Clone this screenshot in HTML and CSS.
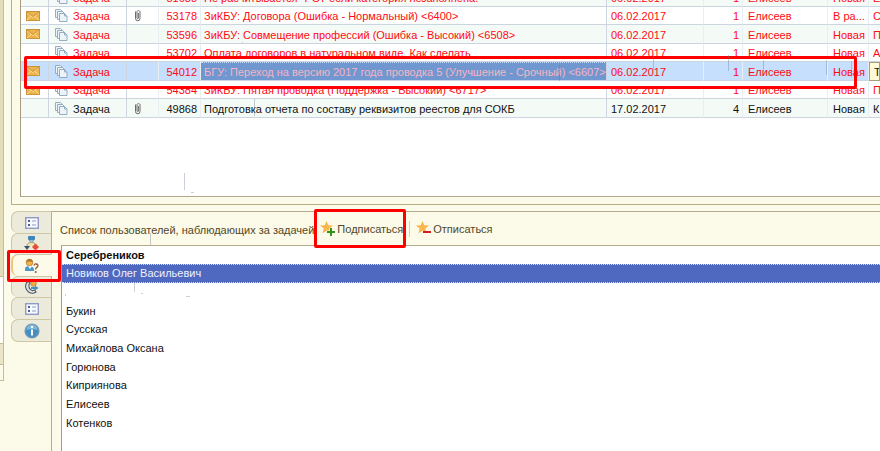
FILE: index.html
```html
<!DOCTYPE html>
<html lang="ru">
<head>
    <meta charset="UTF-8">
    <meta name="viewport" content="width=device-width, initial-scale=1.0">
    <title>Задачи</title>
    <link rel="stylesheet" href="styles.css">
</head>
<body>
    <!-- Shared icons -->
    <svg class="sprite" aria-hidden="true">
        <symbol id="mail" viewBox="0 0 14 10">
            <rect x=".5" y=".5" width="13" height="9" fill="#edb44e" stroke="#cb9439"/>
            <path d="M1 9l4.500-4M13 9L8.500 5" fill="none" stroke="#fbdf98"/>
            <path d="M1 1.500l6 5 6-5" fill="none" stroke="#fbe3a4"/>
            <path d="M1 1l6 4.500L13 1" fill="none" stroke="#b97b22" stroke-width=".7"/>
        </symbol>
        <symbol id="copies" viewBox="0 0 13 13">
            <g fill="#edf4f9" stroke="#8ba5b9" stroke-width=".9">
                <path d="M.5.500h5l2 2v6h-7z"/>
                <path d="M2.500 2.500h5l2 2v6h-7z"/>
                <path d="M4.500 4.500h5l2.500 2.500v5.500H4.500z"/>
                <path d="M9.500 4.500V7H12" fill="none"/>
            </g>
        </symbol>
        <symbol id="clip" viewBox="0 0 8 13">
            <path d="M1.500 2.500v7a2.200 2.200 0 0 0 4.500 0V2.500a1.700 1.700 0 0 0-3 0V9c0 1 1.400 1 1.400 0V4" fill="none" stroke="#6b6b6b"/>
        </symbol>
        <symbol id="form" viewBox="0 0 14 12">
            <rect x=".7" y=".7" width="12.600" height="10.600" fill="#f8faff" stroke="#8f9bc2" stroke-width="1.400"/>
            <path d="M3 4h2M3 8h2" stroke="#4a5da0" stroke-width="2"/>
            <path d="M7 4h4M7 8h4" stroke="#8d9bc4"/>
        </symbol>
        <symbol id="star" viewBox="0 0 15 15">
            <path d="M6.500 0l1.800 4.300 4.700.3-3.600 3 1.200 4.700-4.100-2.600-4 2.600 1.200-4.700L0 4.600l4.700-.3z" fill="#fbb54c"/>
        </symbol>
    </svg>

    <div class="app">
        <aside class="side">
            <div class="side-top"></div>
            <div class="side-list"></div>
            <div class="side-row"></div>
            <div class="side-end"></div>
        </aside>

        <main class="main">
            <section class="tasks">
                <div class="tasks-list">
                    <table>
                        <colgroup>
                            <col class="c-mail"><col class="c-type"><col class="c-clip"><col class="c-num"><col>
                            <col class="c-date"><col class="c-count"><col class="c-user"><col class="c-state"><col class="c-last">
                        </colgroup>
                        <tbody>
                            <tr><td></td><td><svg class="copies"><use href="#copies"/></svg>Задача</td><td></td><td>51688</td><td>Не расчитывается "РСТ если категория незаполнена.</td><td>06.02.2017</td><td>1</td><td>Елисеев</td><td>Новая</td><td>Е</td></tr>
                            <tr><td><svg class="mail"><use href="#mail"/></svg></td><td><svg class="copies"><use href="#copies"/></svg>Задача</td><td><svg class="clip"><use href="#clip"/></svg></td><td>53178</td><td>ЗиКБУ: Договора (Ошибка - Нормальный) &lt;6400&gt;</td><td>06.02.2017</td><td>1</td><td>Елисеев</td><td>В ра...</td><td>С</td></tr>
                            <tr><td><svg class="mail"><use href="#mail"/></svg></td><td><svg class="copies"><use href="#copies"/></svg>Задача</td><td></td><td>53596</td><td>ЗиКБУ: Совмещение профессий (Ошибка - Высокий) &lt;6508&gt;</td><td>06.02.2017</td><td>1</td><td>Елисеев</td><td>Новая</td><td>П</td></tr>
                            <tr><td></td><td><svg class="copies"><use href="#copies"/></svg>Задача</td><td></td><td>53702</td><td>Оплата договоров в натуральном виде. Как сделать</td><td>06.02.2017</td><td>1</td><td>Елисеев</td><td>Новая</td><td>А</td></tr>
                            <tr class="selected"><td><svg class="mail"><use href="#mail"/></svg></td><td><svg class="copies"><use href="#copies"/></svg>Задача</td><td></td><td>54012</td><td class="current">БГУ: Переход на версию 2017 года проводка 5 (Улучшение - Срочный) &lt;6607&gt;</td><td>06.02.2017</td><td>1</td><td>Елисеев</td><td>Новая</td><td class="hint">Т</td></tr>
                            <tr><td><svg class="mail"><use href="#mail"/></svg></td><td><svg class="copies"><use href="#copies"/></svg>Задача</td><td></td><td>54384</td><td>ЗиКБУ: Пятая проводка (Поддержка - Высокий) &lt;6717&gt;</td><td>06.02.2017</td><td>1</td><td>Елисеев</td><td>Новая</td><td>П</td></tr>
                            <tr class="plain"><td></td><td><svg class="copies"><use href="#copies"/></svg>Задача</td><td><svg class="clip"><use href="#clip"/></svg></td><td>49868</td><td>Подготовка отчета по составу реквизитов реестов для СОКБ</td><td>17.02.2017</td><td>4</td><td>Елисеев</td><td>Новая</td><td>К</td></tr>
                        </tbody>
                    </table>
                </div>
                <div class="mark mark-row"></div>
            </section>

            <section class="details">
                <nav class="tabs">
                    <button type="button" class="tab" aria-label="Форма"><svg class="form"><use href="#form"/></svg></button>
                    <button type="button" class="tab" aria-label="Маршрут">
                        <svg class="icon" viewBox="0 0 16 16">
                            <rect x="4" y="0" width="7" height="4" rx="1" fill="#3f87ba"/>
                            <path d="M5 4h5L7.500 7z" fill="#b5d3e6" stroke="#4c87ad" stroke-width=".6"/>
                            <path d="M3 10c0-5 9-5 9 0" fill="#f2e3ad" stroke="#9a9a83"/>
                            <path d="M0 10h6l-3 4z" fill="#35566f"/>
                            <path d="M11.500 7.500L15 11l-3.500 3.500L8 11z" fill="#e94b35"/>
                        </svg>
                    </button>
                    <button type="button" class="tab active" aria-label="Наблюдатели">
                        <svg class="icon" viewBox="0 0 16 16">
                            <path d="M1 13V11q0-3 4-3t5 3v2z" fill="#4b9bc9"/>
                            <path d="M4 8l2 3 2-3z" fill="#fff"/>
                            <circle cx="5.500" cy="4.500" r="3.300" fill="#f3b44c" stroke="#b47c31" stroke-width=".8"/>
                            <path d="M2.500 4q0-3 3-3t3 3q-3-1-6 0z" fill="#b1782c"/>
                            <path d="M10 7.500q.5-1.800 2.300-1.500 1.900.4 1.500 2-.2.900-1.600 1.800-.5.500-.5 1.700" fill="none" stroke="#955b43" stroke-width="1.300"/>
                            <circle cx="11.700" cy="14" r="1" fill="#955b43"/>
                        </svg>
                        <span class="mark mark-tab"></span>
                    </button>
                    <button type="button" class="tab" aria-label="Звонки">
                        <svg class="icon" viewBox="0 0 16 16">
                            <path d="M4 2q-4 4-1.500 8.500T10 14l2-1-1.500-2-2 .7Q4.500 10.500 5 5.500L6 4z" fill="#dfe3e7" stroke="#51575f" stroke-width="1.100"/>
                            <circle cx="9.500" cy="4.500" r="2.800" fill="#f2ad42" stroke="#a9752e" stroke-width=".7"/>
                            <path d="M7 9h5" stroke="#3c92c7" stroke-width="2"/>
                            <path d="M11 6.500L14.500 9 11 11.500z" fill="#3c92c7"/>
                        </svg>
                    </button>
                    <button type="button" class="tab" aria-label="Реквизиты"><svg class="form"><use href="#form"/></svg></button>
                    <button type="button" class="tab" aria-label="Информация">
                        <svg class="icon" viewBox="0 0 16 16">
                            <circle cx="8" cy="8" r="7" fill="#438fc4" stroke="#7c98ad" stroke-width="1.200"/>
                            <path d="M2.500 7a5.500 5.500 0 0 1 11 0q-5.500-2-11 0z" fill="#7fb8dd"/>
                            <path d="M8 3v2M8 6.500v6" stroke="#fff" stroke-width="2"/>
                        </svg>
                    </button>
                </nav>

                <div class="panel">
                    <div class="toolbar">
                        <span class="title">Список пользователей, наблюдающих за задачей</span>
                        <button type="button" class="action">
                            <svg class="star" viewBox="0 0 15 15"><use href="#star"/><path d="M11 7v8M7 11h8" stroke="#fcfae9" stroke-width="3"/><path d="M11 7v8M7 11h8" stroke="#2f9417" stroke-width="2"/></svg>
                            Подписаться
                            <span class="mark mark-action"></span>
                        </button>
                        <span class="divider"></span>
                        <button type="button" class="action">
                            <svg class="star" viewBox="0 0 15 15"><use href="#star"/><path d="M7 11h8" stroke="#d01c24" stroke-width="2"/></svg>
                            Отписаться
                        </button>
                    </div>
                    <ul class="users">
                        <li class="head">Серебреников</li>
                        <li class="selected">Новиков Олег Васильевич</li>
                        <li></li>
                        <li>Букин</li>
                        <li>Сусская</li>
                        <li>Михайлова Оксана</li>
                        <li>Горюнова</li>
                        <li>Киприянова</li>
                        <li>Елисеев</li>
                        <li>Котенков</li>
                    </ul>
                </div>
            </section>
        </main>

        <!-- Leftover strokes over the page -->
        <svg class="strokes" width="880" height="451" viewBox="0 0 880 451" aria-hidden="true">
            <path d="M184.500 173v17M150.500 233v12M134.500 283v9M254.500 99v17M559.500 65v16M653.500 54v16M728.500 55v16M763.500 60v12M826.500 60v15M851.500 61v16"/>
            <path d="M191 192.500h3M141 293.500h2M186 296.500h4M65.500 294v2M242 42.500h1"/>
        </svg>
    </div>
</body>
</html>
```
FILE: styles.css
```css
* {
    box-sizing: border-box;
}
body {
    margin: 0;
    background: #fcfae9;
    color: #111;
    font-family: "Liberation Sans", Arial, sans-serif;
    font-size: 11px;
    line-height: 14px;
}
button {
    font: inherit;
    color: inherit;
    background: none;
    border: none;
    padding: 0;
}
svg {
    display: block;
    flex: none;
}
.sprite {
    position: absolute;
    width: 0;
    height: 0;
}
.app {
    position: relative;
    display: flex;
    gap: 7px;
    min-height: 100vh;
    overflow: hidden;
}
.strokes {
    position: absolute;
    top: 0;
    left: 0;
    fill: none;
    stroke: #64748b;
    stroke-opacity: 0.35;
    pointer-events: none;
}
.side {
    width: 4px;
    flex: none;
}
.side div {
    border-right: 1px solid #c5bd94;
    border-bottom: 1px solid #c5bd94;
}
.side-top {
    height: 277px;
    background: #e3ddba;
}
.side-list {
    height: 67px;
    background: #fffef8;
}
.side-row {
    height: 21px;
    background: #ebe5c8;
}
.side-end {
    height: 16px;
    background: #fcfae9;
}
.main {
    flex: 1;
    min-width: 0;
    display: flex;
    flex-direction: column;
    gap: 6px;
}

/* Task list */
.tasks {
    position: relative;
    border-left: 1px solid #b9af85;
    border-bottom: 1px solid #b9af85;
    padding: 0 0 7px 8px;
}
.tasks-list {
    height: 197px;
    overflow: hidden;
    background: #fff;
    border-left: 1px solid #a79d7c;
    border-bottom: 1px solid #b3a98c;
}
table {
    width: 100%;
    table-layout: fixed;
    border-collapse: separate;
    border-spacing: 0;
    margin-top: -12px;
    color: #ff0a12;
}
.c-mail { width: 28px; }
.c-type { width: 78px; }
.c-clip { width: 32px; }
.c-num { width: 42px; }
.c-date { width: 97px; }
.c-count { width: 39px; }
.c-user { width: 85px; }
.c-state { width: 41px; }
.c-last { width: 11px; }
tr {
    height: 18px;
}
tr:nth-child(odd) {
    height: 19px;
    background: #f4fbf6;
}
tr.selected {
    background: #c6dffd;
}
tr.plain {
    color: #111;
}
td {
    padding: 1px 3px 0 4px;
    border-right: 1px solid #e9eef3;
    border-bottom: 1px solid #cbd5e0;
    white-space: nowrap;
    overflow: hidden;
}
td:nth-child(1), td:nth-child(2), td:nth-child(5) {
    border-right-color: #ccd5e0;
}
td:nth-child(4), td:nth-child(7) {
    text-align: right;
}
td:nth-child(5) {
    padding-left: 3px;
    padding-right: 0;
}
td:nth-child(8), td:nth-child(9) {
    padding-left: 5px;
    padding-right: 0;
}
td:last-child {
    border-right: none;
}
td.current {
    background: #7097cf;
    color: #f4b4c5;
    border-top: 1px dotted #c6dffd;
    overflow: visible;
}
td.hint {
    background: #fffbd9;
    border: 1px solid #a79d7c;
    color: #111;
    padding: 0 0 0 4px;
}
td svg {
    display: inline-block;
    vertical-align: middle;
}
.mail {
    width: 14px;
    height: 10px;
    margin: -3px 0 0 1px;
}
.copies {
    width: 13px;
    height: 13px;
    margin: -3px 5px 0 2px;
}
.clip {
    width: 8px;
    height: 13px;
    margin: -3px 0 0 3px;
}

/* Red highlight frames */
.mark {
    position: absolute;
    border: 3px solid #fe0000;
    border-radius: 2px;
    pointer-events: none;
}
.mark-row {
    left: 12px;
    right: 23px;
    top: 56px;
    height: 33px;
}
.mark-row::before {
    content: "";
    position: absolute;
    inset: 0;
    border-top: 2px solid #fff;
    border-bottom: 5px solid #fff;
}
.mark-tab {
    inset: -5px -10px -6px -6px;
}
.mark-action {
    inset: -12px -3px -12px -6px;
}

/* Task details */
.details {
    flex: 1;
    display: flex;
}
.tabs {
    width: 41px;
    flex: none;
    position: relative;
    z-index: 1;
}
.tab {
    position: relative;
    display: flex;
    align-items: center;
    width: 100%;
    height: 21px;
    padding-left: 12px;
    background: #eceadb;
    border: 1px solid #cec7a6;
    border-bottom: none;
    border-right-color: #b9af85;
    border-radius: 7px 0 0 7px;
}
.tab:nth-child(odd) {
    height: 22px;
}
.tab:last-child {
    height: 23px;
    border-bottom: 1px solid #cec7a6;
}
.tab.active {
    z-index: 1;
    background: #fcfae9;
    border-left: 2px solid #efc57d;
    border-right-color: #fcfae9;
    padding-left: 11px;
}
.icon {
    width: 16px;
    height: 16px;
}
.form {
    width: 14px;
    height: 12px;
    margin-left: 1px;
}
.panel {
    flex: 1;
    min-width: 0;
    display: flex;
    flex-direction: column;
    margin-left: -1px;
    padding-left: 8px;
    border-left: 1px solid #b9af85;
    border-top: 1px solid #b3a98c;
}
.toolbar {
    display: flex;
    align-items: center;
    height: 33px;
    color: #514827;
}
.title {
    margin-right: 6px;
    padding-top: 3px;
}
.action {
    position: relative;
    display: flex;
    align-items: center;
    gap: 2px;
    height: 15px;
}
.divider {
    width: 1px;
    height: 16px;
    margin: 0 6px;
    background: #d5d0b8;
}
.star {
    width: 15px;
    height: 15px;
}
.users {
    flex: 1;
    margin: 0 0 0 1px;
    padding: 0;
    list-style: none;
    background: #fff;
    border-left: 1px solid #a79d7c;
    border-top: 1px solid #b3a98c;
}
.users li {
    height: 19px;
    padding: 2px 4px;
}
.users li:nth-child(3n + 1) {
    height: 18px;
}
.users .head {
    font-weight: bold;
}
.users .selected {
    background: #5069c0;
    color: #eef1ff;
    border: 1px dotted #d5dcf5;
    border-width: 1px 0;
    padding: 1px 4px;
}
```
